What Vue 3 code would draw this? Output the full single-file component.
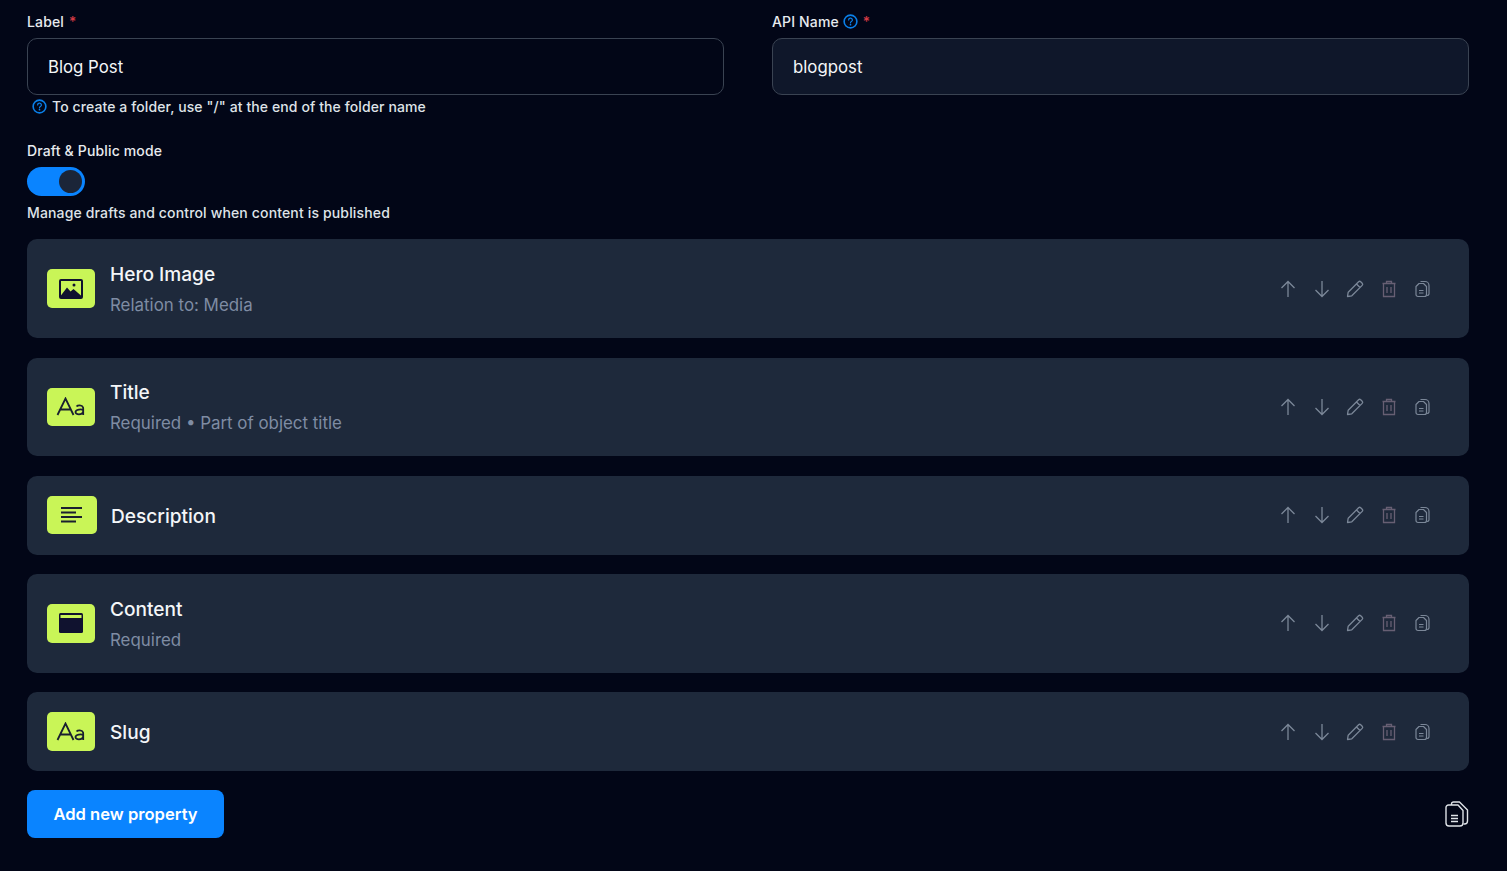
<script setup>
const rows = [
  { title: 'Hero Image', sub: 'Relation to: Media', icon: 'image' },
  { title: 'Title', sub: 'Required • Part of object title', icon: 'text' },
  { title: 'Description', sub: '', icon: 'lines' },
  { title: 'Content', sub: 'Required', icon: 'window' },
  { title: 'Slug', sub: '', icon: 'text' },
]
</script>

<template>
  <main class="page">
    <section class="fields">
      <div class="field">
        <div class="label">Label <span class="req">*</span></div>
        <div class="input">Blog Post</div>
        <div class="hint">
          <svg class="help" viewBox="0 0 16 16" fill="none"><circle cx="8" cy="8" r="6.800" stroke="#0a7fe8" stroke-width="1.700"/><path d="M6 6.400a2 2 0 1 1 3 1.700c-.7.4-1 .7-1 1.300" stroke="#0a7fe8" stroke-width="1.300" stroke-linecap="round"/><circle cx="8" cy="11.400" r=".9" fill="#0a7fe8"/></svg>
          <span>To create a folder, use "/" at the end of the folder name</span>
        </div>
      </div>
      <div class="field">
        <div class="label">API Name
          <svg class="help api" viewBox="0 0 16 16" fill="none"><circle cx="8" cy="8" r="6.800" stroke="#0a7fe8" stroke-width="1.700"/><path d="M6 6.400a2 2 0 1 1 3 1.700c-.7.4-1 .7-1 1.300" stroke="#0a7fe8" stroke-width="1.300" stroke-linecap="round"/><circle cx="8" cy="11.400" r=".9" fill="#0a7fe8"/></svg>
          <span class="req">*</span></div>
        <div class="input filled">blogpost</div>
      </div>
    </section>

    <section class="draft">
      <div class="label">Draft &amp; Public mode</div>
      <div class="toggle"><span class="knob"></span></div>
      <div class="note">Manage drafts and control when content is published</div>
    </section>

    <section class="rows">
      <article v-for="r in rows" :key="r.title" class="row" :class="{ tall: r.sub }">
        <div class="badge" :class="{ wide: r.icon === 'lines' }">
          <svg v-if="r.icon === 'image'" width="24" height="20" viewBox="0 0 24 20"><rect x="1" y="1" width="22" height="18" rx="1" fill="none" stroke="#10122f" stroke-width="2"/><path d="M1.500 17 8 8.500l3.500 4 3-2.500 8 7v1.500h-21z" fill="#10122f"/><circle cx="15" cy="6" r="1.500" fill="#10122f"/></svg>
          <svg v-else-if="r.icon === 'text'" width="30" height="20" viewBox="0 0 30 20" fill="none" stroke="#1a2030" stroke-width="1.800"><path d="M1.500 18 9.500 1.500 17.500 18M4.500 12.500h10"/><path d="M20.500 9.500c1-1.300 5.500-2 6.500.8.300.8.200 1.700.200 2.700V18"/><path d="M27.200 12.800c-1.500-.6-7.700-.8-7.700 2.300 0 3 6.500 3.200 7.700-.3"/></svg>
          <svg v-else-if="r.icon === 'lines'" width="24" height="18" viewBox="0 0 24 18" stroke="#1a2030" stroke-width="1.800"><path d="M1 2h21M1 6.500h15M1 11h21M1 15.500h15"/></svg>
          <svg v-else width="24" height="20" viewBox="0 0 24 20"><rect width="24" height="20" rx="1.500" fill="#10122f"/><rect x="1.500" y="2" width="21" height="3" fill="#c9f557"/></svg>
        </div>
        <div class="text">
          <div class="title">{{ r.title }}</div>
          <div v-if="r.sub" class="sub">{{ r.sub }}</div>
        </div>
        <div class="actions">
          <svg width="20" height="20" viewBox="0 0 20 20" fill="none" stroke="#7b8798" stroke-width="1.300"><path d="M10 18V2.500M3.500 9 10 2.500 16.500 9"/></svg>
          <svg width="20" height="20" viewBox="0 0 20 20" fill="none" stroke="#7b8798" stroke-width="1.300"><path d="M10 2v15.500M3.500 11l6.500 6.500 6.500-6.500"/></svg>
          <svg width="20" height="20" viewBox="0 0 20 20" fill="none" stroke="#7b8798" stroke-width="1.300" stroke-linejoin="round"><path d="M2.500 17.500l.7-4.300L13.600 2.800a1.500 1.500 0 0 1 2.100 0l1.500 1.500a1.500 1.500 0 0 1 0 2.100L6.800 16.800zM11.500 5l3.500 3.500"/></svg>
          <svg width="20" height="20" viewBox="0 0 20 20" fill="none" stroke="#675f73" stroke-width="1.300"><path d="M3.500 4.500h13M7.500 4.500V2.500h5v2M4.500 4.500v13h11v-13M8 8v6M12 8v6"/></svg>
          <svg width="20" height="20" viewBox="0 0 20 20" fill="none" stroke="#7b8798" stroke-width="1.200" stroke-linejoin="round"><path d="M8.500 2.500h4.500a4 4 0 0 1 4 4V15a2 2 0 0 1-2 1.500"/><path d="M7 4.500h4.500l3 3v8a2 2 0 0 1-2 2H6a2 2 0 0 1-2-2v-8zM7 11.500h4.500M7 14h4.500"/></svg>
        </div>
      </article>
    </section>

    <footer class="footer">
      <button class="add" type="button">Add new property</button>
      <svg class="docs" width="24" height="26" viewBox="0 0 24 26" fill="none" stroke="#dfe3e8" stroke-width="1.400" stroke-linejoin="round"><path d="M6.500 4V3a2 2 0 0 1 2-2h6l8 8v11a3 3 0 0 1-3 3h-1"/><path d="M3.500 4h9.500l5 5.500V22a3 3 0 0 1-3 3H4a3 3 0 0 1-3-3V6.500A2.500 2.500 0 0 1 3.500 4zM6 14.500h7M6 17.500h7M6 20.500h7"/></svg>
    </footer>
  </main>
</template>

<style>
html, body { margin: 0; background: #020617; }
</style>

<style scoped>
.page {
  box-sizing: border-box;
  height: 871px;
  padding: 13px 38px 0 27px;
  background: #020617;
  color: #e8ebef;
  font-family: Inter, "Liberation Sans", sans-serif;
  overflow: hidden;
}
.fields { display: grid; grid-template-columns: 697px 697px; column-gap: 48px; }
.label { display: flex; align-items: center; gap: 5px; height: 17px; font-size: 14px; line-height: 17px; font-weight: 500; letter-spacing: .15px; color: #e8ebef; }
.req { color: #d43a45; }
.input {
  box-sizing: border-box;
  height: 57px;
  margin-top: 8px;
  padding: 1px 20px 0;
  display: flex;
  align-items: center;
  border: 1px solid #3a4352;
  border-radius: 10px;
  font-size: 16.800px;
  color: #f4f6f8;
}
.input.filled { background: #0f172a; }
.hint { display: flex; align-items: center; gap: 5px; height: 17px; margin-top: 3px; padding-left: 5px; font-size: 14px; line-height: 17px; font-weight: 500; letter-spacing: .1px; color: #dfe3e8; }
.help { width: 15px; height: 15px; flex: none; }
.help.api { margin-left: -1px; }
.draft { margin-top: 27px; }
.toggle {
  box-sizing: border-box;
  width: 58px;
  height: 29px;
  margin-top: 8px;
  padding: 4px 3px 4px 0;
  display: flex;
  justify-content: flex-end;
  align-items: center;
  border-radius: 15px;
  background: #0a84ff;
}
.knob { width: 23px; height: 23px; border-radius: 50%; background: #1b2538; }
.note { margin-top: 8px; font-size: 14px; line-height: 17px; font-weight: 500; letter-spacing: .15px; color: #dfe3e8; }
.rows { display: flex; flex-direction: column; gap: 19.400px; margin-top: 18.400px; }
.row {
  box-sizing: border-box;
  height: 78.800px;
  padding: 0 37px 0 20px;
  display: flex;
  align-items: center;
  border-radius: 10px;
  background: #1e293b;
}
.row.tall { height: 98.800px; }
.badge {
  width: 48px;
  height: 38.600px;
  flex: none;
  display: flex;
  align-items: center;
  justify-content: center;
  border-radius: 5px;
  background: #c9f557;
}
.badge.wide { width: 50px; margin-right: -1px; }
.text { flex: 1; margin-left: 15px; padding-top: 1px; }
.title { font-size: 19.100px; line-height: 24px; font-weight: 500; color: #f4f6f8; }
.sub { margin-top: 8px; font-size: 16.900px; line-height: 22px; color: #7f8ca3; }
.actions { display: flex; gap: 13.500px; align-items: center; }
.actions svg { display: block; }
.footer { display: flex; justify-content: space-between; align-items: center; margin-top: 19px; }
.add {
  width: 197px;
  height: 48px;
  border: 0;
  border-radius: 8px;
  background: #0a84ff;
  color: #fff;
  font: 600 16.600px Inter, "Liberation Sans", sans-serif;
}
</style>
